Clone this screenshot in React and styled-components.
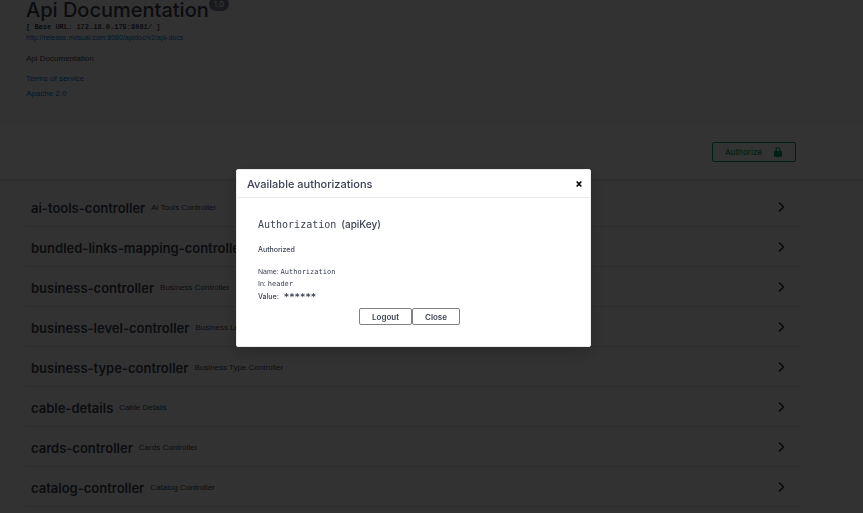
import styled, { createGlobalStyle } from 'styled-components';

const tags = [
    { name: 'ai-tools-controller', description: 'Ai Tools Controller' },
    { name: 'bundled-links-mapping-controller', description: 'Bundled Links Mapping Controller' },
    { name: 'business-controller', description: 'Business Controller' },
    { name: 'business-level-controller', description: 'Business Level Controller' },
    { name: 'business-type-controller', description: 'Business Type Controller' },
    { name: 'cable-details', description: 'Cable Details' },
    { name: 'cards-controller', description: 'Cards Controller' },
    { name: 'catalog-controller', description: 'Catalog Controller' },
];

const LockIcon = () => (
    <svg width="10" height="10" viewBox="0 0 20 20" aria-hidden="true">
        <path
            fill="#00a060"
            d="M16 8h-1V5.6C15 2.7 13.7 0.5 10 0.5S5 2.7 5 5.6V8H4c-1.1 0-2 0.8-2 1.9V17c0 1 0.7 2 1.7 2.3l1.2 0.4c0.6 0.2 1.5 0.3 2.1 0.3h6c0.6 0 1.5-0.1 2.1-0.3l1.2-0.4C17.3 19 18 18 18 17V9.9C18 8.8 17.1 8 16 8zm-3.5 0h-5V5.2C7.5 3.6 8.3 2.7 10 2.7s2.5 0.9 2.5 2.5V8z"
        />
    </svg>
);

const ArrowIcon = () => (
    <svg width="10" height="10" viewBox="0 0 10 10" aria-hidden="true">
        <path d="M3 0.5L7.5 5L3 9.5" fill="none" stroke="black" strokeWidth="1.1" />
    </svg>
);

const CloseIcon = () => (
    <svg width="6" height="6" viewBox="0 0 6 6" aria-hidden="true">
        <path d="M0.7 0.5L5.3 5.5M5.3 0.5L0.7 5.5" fill="none" stroke="black" strokeWidth="1.6" />
    </svg>
);

const App = () => {
    return (
        <>
            <GlobalStyle />
            <Page>
                <Info>
                    <Title>
                        Api Documentation
                        <Version>1.0</Version>
                    </Title>
                    <BaseUrl>[ Base URL: 172.18.0.175:8081/ ]</BaseUrl>
                    <SpecLink href="#docs">http://release.nvisual.com:8080/apidoc/v2/api-docs</SpecLink>
                    <Description>Api Documentation</Description>
                    <InfoLink href="#terms">Terms of service</InfoLink>
                    <InfoLink href="#license">Apache 2.0</InfoLink>
                </Info>

                <SchemeBar>
                    <AuthorizeButton type="button">
                        Authorize
                        <LockIcon />
                    </AuthorizeButton>
                </SchemeBar>

                <TagList>
                    {tags.map((tag) => (
                        <TagRow key={tag.name}>
                            <TagName href={`#${tag.name}`}>{tag.name}</TagName>
                            <TagDescription>{tag.description}</TagDescription>
                            <ExpandButton type="button" aria-label={`Expand ${tag.name}`}>
                                <ArrowIcon />
                            </ExpandButton>
                        </TagRow>
                    ))}
                </TagList>
            </Page>

            <Backdrop>
                <Modal role="dialog" aria-labelledby="auth-title">
                    <ModalHeader>
                        <ModalTitle id="auth-title">Available authorizations</ModalTitle>
                        <CloseButton type="button" aria-label="Close dialog">
                            <CloseIcon />
                        </CloseButton>
                    </ModalHeader>
                    <ModalBody>
                        <SchemeName>
                            <Code size="10px">Authorization</Code>
                            <span>(apiKey)</span>
                        </SchemeName>
                        <Status>Authorized</Status>
                        <Field>
                            Name: <Code size="7px">Authorization</Code>
                        </Field>
                        <Field>
                            In: <Code size="7px">header</Code>
                        </Field>
                        <ValueField>
                            Value: <Mask>******</Mask>
                        </ValueField>
                        <ButtonRow>
                            <ModalButton type="button">Logout</ModalButton>
                            <ModalButton type="button">Close</ModalButton>
                        </ButtonRow>
                    </ModalBody>
                </Modal>
            </Backdrop>
        </>
    );
};

export default App;

const GlobalStyle = createGlobalStyle`
    * {
        box-sizing: border-box;
    }

    body {
        margin: 0;
        height: 100vh;
        overflow: hidden;
        background: #fafafa;
        color: #3b4151;
        font-family: Inter, "Liberation Sans", sans-serif;
    }

    button {
        font-family: inherit;
        cursor: pointer;
    }

    a {
        text-decoration: none;
    }
`;

const Page = styled.div`
    width: 100%;
`;

const Info = styled.header`
    display: flex;
    flex-direction: column;
    align-items: flex-start;
    padding: 0 26px 25px;
    font-family: "Liberation Sans", sans-serif;
`;

const Title = styled.h1`
    display: flex;
    align-items: flex-start;
    margin: -3px 0 0;
    font-family: Inter, sans-serif;
    font-size: 20px;
    font-weight: 500;
    line-height: 26px;
`;

const Version = styled.span`
    padding: 0 5px;
    border-radius: 8px;
    background: #7d8492;
    color: white;
    font-size: 8px;
    font-weight: 400;
    line-height: 14px;
`;

const BaseUrl = styled.span`
    font-family: "Liberation Mono", monospace;
    font-size: 7px;
    font-weight: 700;
    line-height: 9px;
`;

const SpecLink = styled.a`
    color: #0080e8;
    font-size: 7px;
    line-height: 11px;
`;

const Description = styled.p`
    margin: 10px 0 6px;
    font-size: 8px;
    line-height: 12px;
`;

const InfoLink = styled.a`
    color: #0080e8;
    font-size: 8px;
    line-height: 15px;
`;

const SchemeBar = styled.section`
    display: flex;
    justify-content: flex-end;
    padding: 16px 67px 17px 26px;
    background: white;
    box-shadow: 0 1px 2px rgba(0, 0, 0, 0.15);
`;

const AuthorizeButton = styled.button`
    display: flex;
    align-items: center;
    gap: 11px;
    height: 20px;
    padding: 0 12px;
    border: 1px solid #00a060;
    border-radius: 2px;
    background: transparent;
    color: #00a060;
    font-size: 8px;
    font-weight: 500;
`;

const TagList = styled.main`
    padding: 8px 63px 0 26px;
`;

const TagRow = styled.div`
    display: flex;
    align-items: center;
    height: 40px;
    padding: 2px 14px 0 5px;
    border-bottom: 1px solid #d8dae0;
`;

const TagName = styled.a`
    color: #3b4151;
    font-size: 13px;
    font-weight: 600;
    line-height: 20px;
`;

const TagDescription = styled.span`
    flex: 1;
    padding-left: 6px;
    font-family: "Liberation Sans", sans-serif;
    font-size: 8px;
    line-height: 12px;
`;

const ExpandButton = styled.button`
    display: flex;
    padding: 0 0 2px;
    border: none;
    background: none;
`;

const Backdrop = styled.div`
    position: fixed;
    inset: 0;
    display: flex;
    align-items: center;
    justify-content: center;
    padding: 3px 36px 0 0;
    background: rgba(0, 0, 0, 0.8);
`;

const Modal = styled.div`
    width: 355px;
    border: 1px solid #ebebeb;
    border-radius: 2px;
    background: white;
    box-shadow: 0 6px 18px rgba(0, 0, 0, 0.2);
`;

const ModalHeader = styled.div`
    display: flex;
    align-items: center;
    justify-content: space-between;
    height: 28px;
    padding: 0 8px 0 10px;
    border-bottom: 1px solid #ebebeb;
`;

const ModalTitle = styled.h3`
    margin: 0;
    font-size: 11px;
    font-weight: 500;
    line-height: 16px;
`;

const CloseButton = styled.button`
    display: flex;
    padding: 0;
    border: none;
    background: none;
`;

const ModalBody = styled.div`
    padding: 18px 21px 21px;
`;

const SchemeName = styled.h4`
    display: flex;
    align-items: baseline;
    gap: 5px;
    margin: 0 0 11px;
    font-size: 10px;
    font-weight: 500;
    line-height: 16px;
`;

const Code = styled.code`
    font-family: "DejaVu Sans Mono", monospace;
    font-size: ${(props) => props.size};
    font-weight: 400;
`;

const Status = styled.h6`
    margin: 0 0 10px;
    font-size: 7px;
    font-weight: 500;
    line-height: 12px;
`;

const Field = styled.p`
    margin: 0;
    font-family: "Liberation Sans", sans-serif;
    font-size: 7px;
    line-height: 12px;
`;

const ValueField = styled.div`
    display: flex;
    gap: 5px;
    font-size: 7px;
    font-weight: 500;
    line-height: 14px;
`;

const Mask = styled.code`
    font-family: "DejaVu Sans Mono", monospace;
    font-size: 9px;
    font-weight: 700;
`;

const ButtonRow = styled.div`
    display: flex;
    justify-content: center;
    margin-top: 4px;
    padding-right: 8px;
`;

const ModalButton = styled.button`
    height: 17px;
    padding: 0 12px;
    border: 1px solid #808080;
    border-radius: 2px;
    background: transparent;
    color: #3b4151;
    font-size: 8px;
    font-weight: 600;
`;
